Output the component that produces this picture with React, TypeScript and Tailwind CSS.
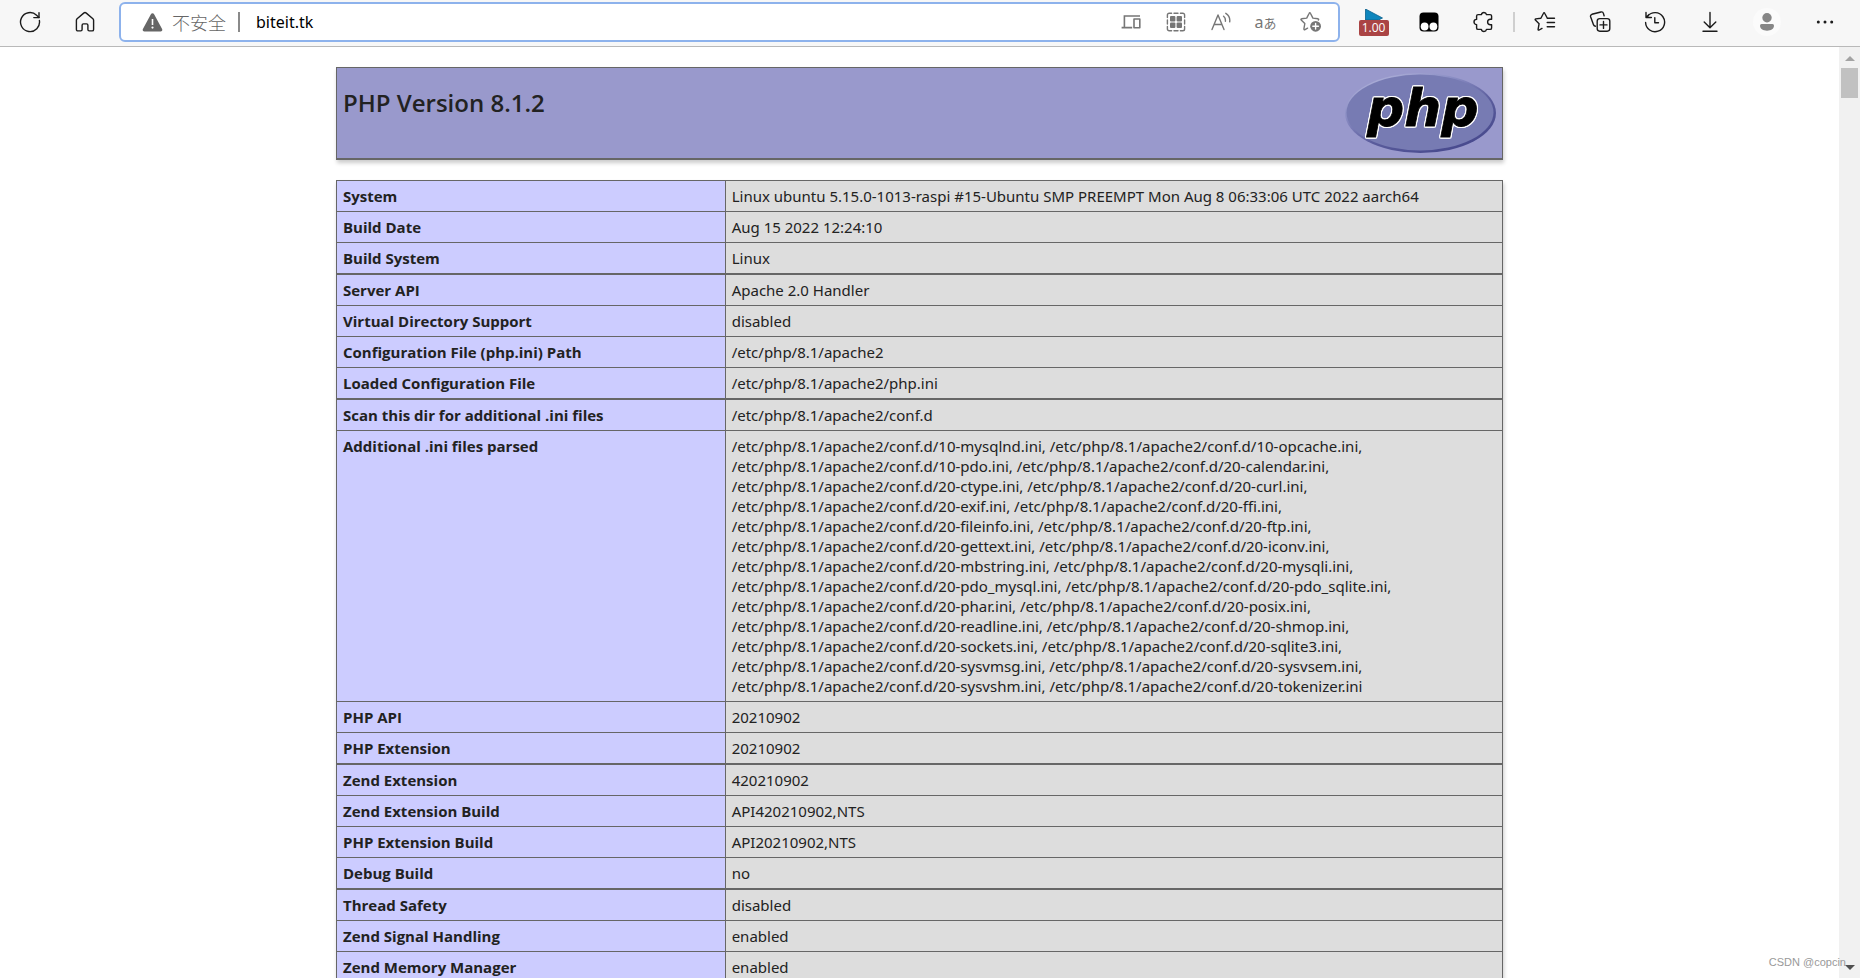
import type { ReactNode } from "react";

type Row = { name: string; value: string; thick?: boolean };

const rows: Row[] = [
  { name: "System", value: "Linux ubuntu 5.15.0-1013-raspi #15-Ubuntu SMP PREEMPT Mon Aug 8 06:33:06 UTC 2022 aarch64" },
  { name: "Build Date", value: "Aug 15 2022 12:24:10" },
  { name: "Build System", value: "Linux", thick: true },
  { name: "Server API", value: "Apache 2.0 Handler" },
  { name: "Virtual Directory Support", value: "disabled" },
  { name: "Configuration File (php.ini) Path", value: "/etc/php/8.1/apache2" },
  { name: "Loaded Configuration File", value: "/etc/php/8.1/apache2/php.ini", thick: true },
  { name: "Scan this dir for additional .ini files", value: "/etc/php/8.1/apache2/conf.d" },
  {
    name: "Additional .ini files parsed",
    value: [
      ["10-mysqlnd", "10-opcache"],
      ["10-pdo", "20-calendar"],
      ["20-ctype", "20-curl"],
      ["20-exif", "20-ffi"],
      ["20-fileinfo", "20-ftp"],
      ["20-gettext", "20-iconv"],
      ["20-mbstring", "20-mysqli"],
      ["20-pdo_mysql", "20-pdo_sqlite"],
      ["20-phar", "20-posix"],
      ["20-readline", "20-shmop"],
      ["20-sockets", "20-sqlite3"],
      ["20-sysvmsg", "20-sysvsem"],
      ["20-sysvshm", "20-tokenizer"],
    ]
      .map((pair) => pair.map((f) => `/etc/php/8.1/apache2/conf.d/${f}.ini`).join(", "))
      .join(",\n"),
  },
  { name: "PHP API", value: "20210902" },
  { name: "PHP Extension", value: "20210902", thick: true },
  { name: "Zend Extension", value: "420210902" },
  { name: "Zend Extension Build", value: "API420210902,NTS" },
  { name: "PHP Extension Build", value: "API20210902,NTS" },
  { name: "Debug Build", value: "no", thick: true },
  { name: "Thread Safety", value: "disabled" },
  { name: "Zend Signal Handling", value: "enabled" },
  { name: "Zend Memory Manager", value: "enabled" },
];

function ToolButton({ label, children }: { label: string; children: ReactNode }) {
  return (
    <button type="button" aria-label={label} className="flex h-10 w-[55px] shrink-0 items-center justify-center text-[#1b1b1b]">
      {children}
    </button>
  );
}

function FieldButton({ label, children }: { label: string; children: ReactNode }) {
  return (
    <button type="button" aria-label={label} className="flex h-8 w-[45px] shrink-0 items-center justify-center text-[#767676]">
      {children}
    </button>
  );
}

function Icon({ children, size = 22 }: { children: ReactNode; size?: number }) {
  return (
    <svg
      width={size}
      height={size}
      viewBox={`0 0 ${size} ${size}`}
      fill="none"
      stroke="currentColor"
      strokeWidth="1.4"
      strokeLinecap="round"
      strokeLinejoin="round"
      aria-hidden="true"
    >
      {children}
    </svg>
  );
}

function Toolbar() {
  return (
    <header className="flex h-[47px] shrink-0 items-start border-b border-[#b9b9b9] bg-[#f7f7f7] pl-[2px] pr-2 pt-[2px]">
      <ToolButton label="Refresh">
        <Icon>
          <path d="M20.4 9.5A9.5 9.5 0 1 1 17.6 4.2L20 6.6" />
          <path d="M20 1.6v5h-5.2" />
        </Icon>
      </ToolButton>
      <ToolButton label="Home">
        <Icon>
          <path d="M2.4 9.2c0-.6.3-1.1.7-1.5l6.6-5.6a2 2 0 0 1 2.6 0l6.6 5.6c.4.4.7.9.7 1.5v9.2c0 .9-.6 1.5-1.4 1.5h-3c-.8 0-1.3-.5-1.3-1.3v-4.4c0-.8-.5-1.3-1.3-1.3H9.4c-.8 0-1.3.5-1.3 1.3v4.4c0 .8-.5 1.3-1.3 1.3h-3c-.8 0-1.4-.6-1.4-1.5z" />
        </Icon>
      </ToolButton>

      <form className="ml-[7px] flex h-10 min-w-0 flex-1 items-center rounded-md border-2 border-[#8db2ec] bg-white pl-[21px] pr-[5px]">
        <svg width="21" height="19" viewBox="0 0 21 19" aria-hidden="true">
          <path d="M8.9 1.2a1.8 1.8 0 0 1 3.2 0l8 14.8a1.7 1.7 0 0 1-1.5 2.5H2.4A1.7 1.7 0 0 1 .9 16z" fill="#666" />
          <path d="M10.5 6v6" stroke="#fff" strokeWidth="1.6" />
          <circle cx="10.5" cy="14.6" r="1.1" fill="#fff" />
        </svg>
        <label htmlFor="address" className="ml-[9px] whitespace-nowrap font-['Noto_Sans_CJK_SC',sans-serif] text-[18px] font-light leading-6 text-[#666]">
          不安全
        </label>
        <span className="ml-3 h-5 w-[2px] bg-[#8a8a8a]" />
        <input
          id="address"
          type="text"
          defaultValue="biteit.tk"
          className="ml-4 h-8 min-w-0 flex-1 bg-transparent font-['Noto_Sans',sans-serif] text-[16px] leading-6 text-black outline-none"
        />
        <FieldButton label="Send to devices">
          <Icon size={20}>
            <g strokeLinejoin="miter" strokeLinecap="butt" strokeWidth="1.6">
              <path d="M19 4H3.4v11.2M.6 15.6h10.6" />
              <path d="M13 7h5.8v8.8H13z" strokeLinejoin="round" />
            </g>
          </Icon>
        </FieldButton>
        <FieldButton label="QR code">
          <Icon size={20}>
            <path d="M1.4 5.5V3a1.8 1.8 0 0 1 1.8-1.8h2.4M14.4 1.2h2.4A1.8 1.8 0 0 1 18.6 3v2.5M18.6 14.5V17a1.8 1.8 0 0 1-1.8 1.8h-2.4M5.6 18.8H3.2A1.8 1.8 0 0 1 1.4 17v-2.5M1.4 8v4M18.6 8v4M8 1.2h4M8 18.8h4" />
            <g fill="currentColor" stroke="none">
              <rect x="4" y="4" width="5.4" height="5.4" rx="1" />
              <rect x="10.6" y="4" width="5.4" height="5.4" rx="1" />
              <rect x="4" y="10.6" width="5.4" height="5.4" rx="1" />
              <rect x="10.6" y="10.6" width="5.4" height="5.4" rx="1" />
            </g>
          </Icon>
        </FieldButton>
        <FieldButton label="Read aloud">
          <Icon size={20}>
            <path d="M1 17.5 7 3l6 14.5M3 12.5h8" />
            <path d="M12.6 4.3c1.5 1.3 2 3 1.8 4.9M14.8 1.3c3 2 4.4 5 3.9 8.5" />
          </Icon>
        </FieldButton>
        <FieldButton label="Translate">
          <span className="whitespace-nowrap font-['Noto_Sans','Noto_Sans_CJK_JP',sans-serif] text-[16px] leading-5">
            a<span className="text-[13px]">あ</span>
          </span>
        </FieldButton>
        <FieldButton label="Add to favorites">
          <Icon>
            <path d="M7.6 17.2 5 18.6c-.7.4-1.2 0-1.1-.7l.9-5.3L1.2 9c-.5-.5-.3-1 .4-1.2l5.1-.7 2.5-4.9c.3-.7.9-.7 1.2 0l2.5 4.9 5.1.7c.7.2.9.7.4 1.2" />
            <circle cx="15.6" cy="15.3" r="5.4" fill="currentColor" stroke="none" />
            <path d="M15.6 12.5v5.6M12.8 15.3h5.6" stroke="#fff" />
          </Icon>
        </FieldButton>
      </form>

      <div className="ml-[6px] flex items-center">
        <ToolButton label="Playback speed">
          <span className="flex flex-col items-center">
            <svg width="18" height="11" viewBox="0 0 18 11" aria-hidden="true">
              <path d="M.5 0 17.5 9l-4 2H.5z" fill="#0f86bd" stroke="#0b5f8c" strokeWidth=".8" />
            </svg>
            <span className="h-4 w-[30px] rounded-[2px] bg-[#aa4444] text-center font-['Open_Sans',sans-serif] text-[12px] leading-4 text-white">
              1.00
            </span>
          </span>
        </ToolButton>
        <ToolButton label="Tampermonkey">
          <svg width="20" height="20" viewBox="0 0 20 20" aria-hidden="true">
            <rect x=".5" y=".5" width="19" height="19" rx="4" fill="#000" />
            <circle cx="5.6" cy="14.5" r="3.9" fill="#fff" />
            <circle cx="14.4" cy="14.5" r="3.9" fill="#fff" />
          </svg>
        </ToolButton>
        <ToolButton label="Extensions">
          <Icon>
            <path d="M8.4 3.6a2.6 2.6 0 0 1 5.1 0h3.6c.9 0 1.5.6 1.5 1.5v3.1h-1.2a2.8 2.8 0 0 0 0 5.6h1.2v3.1c0 .9-.6 1.5-1.5 1.5h-3.6a2.6 2.6 0 0 1-5.1 0H5.1c-.9 0-1.5-.6-1.5-1.5v-3.3a2.6 2.6 0 0 1 0-5.2V5.1c0-.9.6-1.5 1.5-1.5z" />
          </Icon>
        </ToolButton>
        <span className="mx-[2px] h-5 w-[2px] bg-[#cfcfcf]" />
        <ToolButton label="Favorites">
          <Icon>
            <path d="M8 17.4 5.2 19c-.7.4-1.2 0-1.1-.7l1-5.6-3.7-3.6c-.5-.5-.3-1 .4-1.2l5.1-.7 2.6-5c.3-.7.9-.7 1.2 0l2.4 4.6M13.2 7.2H20.5M13.2 11.5H20.5M13.2 15.8H20.5" />
          </Icon>
        </ToolButton>
        <ToolButton label="Collections">
          <Icon>
            <rect x="8.2" y="7.6" width="12.6" height="12.6" rx="2.6" />
            <path d="M14.5 10.4v7M11 13.9h7M6.4 15.2c-1-.2-1.7-.7-2-1.7L1.6 5.8c-.3-1.1.2-2.1 1.3-2.5l9-2.3c1.2-.3 2.2.3 2.5 1.4l.7 2.4" />
          </Icon>
        </ToolButton>
        <ToolButton label="History">
          <Icon>
            <path d="M1.6 11.5A9.5 9.5 0 1 0 3.7 5.2M2 1.5v5h5.4M2.2 6.3 5 3.6" />
            <path d="M10.8 6.6v5.2h3.7" />
          </Icon>
        </ToolButton>
        <ToolButton label="Downloads">
          <Icon>
            <path d="M11 1.4v15.2M5.2 11l5.8 5.8 5.8-5.8M4 20.3h14" />
          </Icon>
        </ToolButton>
        <button type="button" aria-label="Profile" className="flex h-10 w-[60px] items-center justify-center">
          <svg width="28" height="28" viewBox="0 0 28 28" aria-hidden="true">
            <circle cx="14" cy="14" r="14" fill="#fbfbfb" />
            <circle cx="14" cy="9.8" r="4.7" fill="#868686" />
            <path d="M7 17.5a1.5 1.5 0 0 1 1.5-1.5h11a1.5 1.5 0 0 1 1.5 1.5c0 3.4-3 5.2-7 5.2s-7-1.8-7-5.2z" fill="#868686" />
          </svg>
        </button>
        <ToolButton label="Settings and more">
          <svg width="18" height="4" viewBox="0 0 18 4" fill="#1b1b1b" aria-hidden="true">
            <circle cx="2.3" cy="2" r="1.5" />
            <circle cx="9" cy="2" r="1.5" />
            <circle cx="15.7" cy="2" r="1.5" />
          </svg>
        </ToolButton>
      </div>
    </header>
  );
}

function PhpLogo() {
  return (
    <svg width="151" height="80" viewBox="0 0 151 80" role="img" aria-label="PHP logo" className="shrink-0">
      <defs>
        <linearGradient id="rim" x1="0.15" y1="0" x2="0.85" y2="1">
          <stop offset="0" stopColor="#b4b6dc" />
          <stop offset="0.3" stopColor="#8b8ec4" />
          <stop offset="0.6" stopColor="#5a5c9c" />
          <stop offset="1" stopColor="#43458a" />
        </linearGradient>
      </defs>
      <ellipse cx="75.5" cy="40" rx="75.5" ry="40" fill="url(#rim)" />
      <ellipse cx="75" cy="39.5" rx="73.5" ry="38" fill="#777bb3" />
      <text
        x="22"
        y="53"
        fontFamily="'DejaVu Sans', Verdana, sans-serif"
        fontSize="52"
        fontWeight="700"
        fontStyle="italic"
        fill="#000"
        stroke="#000"
        strokeWidth="0.8"
        className="[filter:drop-shadow(1px_0_0_#fff)_drop-shadow(-1px_0_0_#fff)_drop-shadow(0_1px_0_#fff)_drop-shadow(0_-1px_0_#fff)]"
      >
        php
      </text>
    </svg>
  );
}

function Scrollbar() {
  return (
    <div aria-hidden="true" className="flex w-[21px] shrink-0 flex-col items-center bg-[#f1f1f1] pb-2 pt-[9px]">
      <svg width="10" height="5" viewBox="0 0 10 5">
        <path d="M0 5 5 0l5 5z" fill="#a3a3a3" />
      </svg>
      <div className="mt-[7px] h-[30px] w-[17px] bg-[#c1c1c1]" />
      <svg width="10" height="5" viewBox="0 0 10 5" className="mt-auto">
        <path d="M0 0h10L5 5z" fill="#505050" />
      </svg>
    </div>
  );
}

export default function App() {
  return (
    <div className="relative flex h-screen flex-col overflow-hidden bg-white font-['Open_Sans',sans-serif] text-[#222]">
      <Toolbar />
      <div className="flex min-h-0 flex-1">
        <main className="min-w-0 flex-1 overflow-hidden pt-5">
          <div className="mx-auto flex max-w-[1167px] flex-col gap-5">
            <div className="flex items-start justify-between border border-b-2 border-[#666] bg-[#9999cc] py-[5px] pl-[6px] pr-[6px] shadow-[1px_3px_4px_#ccc]">
              <h1 className="pt-[14px] text-[24px] font-semibold leading-8">PHP Version 8.1.2</h1>
              <PhpLogo />
            </div>
            <table className="w-full table-fixed border-separate border-spacing-0 border-l border-t border-[#666] text-left text-[15px] leading-5 shadow-[1px_3px_4px_#ccc]">
              <colgroup>
                <col className="w-1/3" />
                <col />
              </colgroup>
              <tbody>
                {rows.map((row) => {
                  const edge = row.thick ? "border-b-2" : "border-b";
                  return (
                    <tr key={row.name}>
                      <th scope="row" className={`${edge} border-r border-[#666] bg-[#ccccff] px-[6px] py-[5px] align-top font-bold`}>
                        {row.name}
                      </th>
                      <td
                        className={`${edge} whitespace-pre-line border-r border-[#666] bg-[#dddddd] px-[6px] py-[5px] align-top font-['Noto_Sans',sans-serif]`}
                      >
                        {row.value}
                      </td>
                    </tr>
                  );
                })}
              </tbody>
            </table>
          </div>
        </main>
        <Scrollbar />
      </div>
      <span className="absolute bottom-2 right-[14px] font-['Liberation_Sans',sans-serif] text-[11px] leading-4 text-[#999]">
        CSDN @copcin
      </span>
    </div>
  );
}
